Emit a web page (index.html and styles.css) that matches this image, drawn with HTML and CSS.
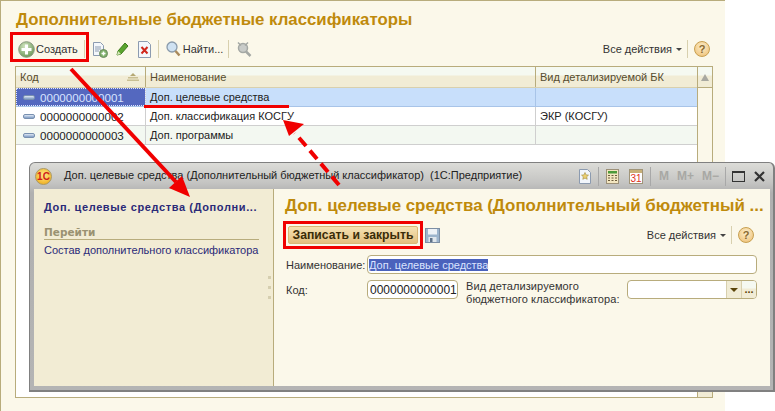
FILE: index.html
```html
<!DOCTYPE html>
<html lang="en">
<head>
  <meta charset="UTF-8" />
  <title>Дополнительные бюджетные классификаторы</title>
  <link rel="stylesheet" href="styles.css">
</head>
<body>
  <div class="page">
    <h1 class="title">Дополнительные бюджетные классификаторы</h1>

    <div class="toolbar">
      <div class="tool create">
        <svg width="17" height="17" viewBox="0 0 17 17"><defs><radialGradient id="g1" cx="40%" cy="30%" r="70%"><stop offset="0" stop-color="#d3e6c0"/><stop offset="1" stop-color="#6f9a5c"/></radialGradient></defs><circle cx="8.5" cy="8.5" r="7.8" fill="url(#g1)" stroke="#8a9a80"/><path d="M7 3.5h3V7h3.5v3H10v3.5H7V10H3.5V7H7z" fill="#fff"/></svg>
        <span>Создать</span>
      </div>
      <span class="sep"></span>
      <svg class="icon" width="16" height="17" viewBox="0 0 16 17"><path d="M1.500 1.500h7l3 3v10h-10z" fill="#f4f7fb" stroke="#8c9bb0"/><path d="M3 6h6M3 8h6M3 10h4" stroke="#8c9bb0"/><circle cx="11.500" cy="12.500" r="4" fill="#7fb069" stroke="#6d8a60"/><path d="M9.500 12.500h4M11.500 10.500v4" stroke="#fff" stroke-width="1.500"/></svg>
      <svg class="icon pencil" width="13" height="14" viewBox="0 0 13 14"><path d="M1 13l1-4 7-8 3 3-7 8z" fill="#5aa52e" stroke="#3d7a1c"/><path d="M1 13l1-4 3 3z" fill="#d8e8b8"/></svg>
      <svg class="icon del" width="13" height="17" viewBox="0 0 13 17"><path d="M.5.500h9l3 3v13H.5z" fill="#f4f7fb" stroke="#8c9bb0"/><path d="M3.500 6l6 6.500M9.500 6l-6 6.500" stroke="#d0281c" stroke-width="2"/></svg>
      <span class="sep"></span>
      <div class="tool find">
        <svg width="15" height="16" viewBox="0 0 15 16"><circle cx="6" cy="6" r="5" fill="#cfe2f2" stroke="#8a9bab" stroke-width="1.300"/><path d="M9.500 10l4 4.500" stroke="#a98a5c" stroke-width="2.500"/></svg>
        <span>Найти...</span>
      </div>
      <span class="sep"></span>
      <svg class="icon find-off" width="16" height="17" viewBox="0 0 16 17"><circle cx="7" cy="7" r="4.500" fill="#c9ccc9" stroke="#a4a8a4" stroke-width="1.500"/><path d="M10 10.500l4.500 4.500" stroke="#a4a8a4" stroke-width="2.500"/><path d="M2 1.500l3 3M12 1.500l-3 3" stroke="#a4a8a4" stroke-width="1.500"/></svg>
      <div class="actions">
        <span>Все действия</span><span class="caret"></span><span class="sep"></span>
        <span class="help">?</span>
      </div>
    </div>

    <div class="list">
      <div class="list-main">
        <div class="row head">
          <div class="cell c1">Код<svg class="sort" width="12" height="8" viewBox="0 0 12 8"><path d="M6 0l3 3H3z" fill="#b5a974"/><path d="M1 4h10v1.500H1zM0 6.500h12V8H0z" fill="#c9bf92"/></svg></div>
          <div class="cell c2">Наименование</div>
          <div class="cell c3">Вид детализируемой БК</div>
        </div>
        <div class="row selected">
          <div class="cell c1 code"><span class="dash"></span>0000000000001</div>
          <div class="cell c2">Доп. целевые средства</div>
          <div class="cell c3"></div>
        </div>
        <div class="row">
          <div class="cell c1 code"><span class="dash"></span>0000000000002</div>
          <div class="cell c2">Доп. классификация КОСГУ</div>
          <div class="cell c3">ЭКР (КОСГУ)</div>
        </div>
        <div class="row alt">
          <div class="cell c1 code"><span class="dash"></span>0000000000003</div>
          <div class="cell c2">Доп. программы</div>
          <div class="cell c3"></div>
        </div>
      </div>
      <div class="scrollbar">
        <div class="scroll-up"><span></span></div>
        <div class="scroll-track"></div>
        <div class="scroll-thumb"></div>
      </div>
    </div>
  </div>

  <!-- floating window -->
  <div class="window">
    <div class="win-title">
      <svg class="logo" width="17" height="17" viewBox="0 0 17 17"><defs><radialGradient id="g2" cx="50%" cy="40%" r="60%"><stop offset="0" stop-color="#ffe98a"/><stop offset="1" stop-color="#f0b020"/></radialGradient></defs><circle cx="8.500" cy="8.500" r="8" fill="url(#g2)" stroke="#a89868"/><text x="8.500" y="12" text-anchor="middle" class="logo-text">1С</text></svg>
      <span class="win-caption">Доп. целевые средства (Дополнительный бюджетный классификатор)  (1С:Предприятие)</span>
      <div class="win-tools">
        <svg width="12" height="15" viewBox="0 0 12 15"><path d="M.5.500h8l3 3v11H.5z" fill="#f2f6fb" stroke="#8c9bb0"/><path d="M6 3.500l1.100 2.400 2.400.2-1.800 1.700.5 2.500L6 9.100 3.800 10.300l.5-2.500-1.800-1.700 2.400-.2z" fill="#ecd070" stroke="#a08a3c" stroke-width=".6"/></svg>
        <span class="sep"></span>
        <svg width="13" height="15" viewBox="0 0 13 15"><rect x=".5" y=".5" width="12" height="14" fill="#f3e6c0" stroke="#9c9078"/><rect x="2" y="2" width="9" height="2.500" fill="#4d9a3a"/><path d="M2 6.500h2M5.500 6.500h2M9 6.500h2M2 9h2M5.500 9h2M9 9h2M2 11.500h2M5.500 11.500h2M9 11.500h2" stroke="#6a5a3a" stroke-width="1.200"/></svg>
        <svg class="cal" width="14" height="15" viewBox="0 0 14 15"><rect x=".5" y=".5" width="13" height="14" fill="#fff" stroke="#a09478"/><rect x="1" y="1" width="12" height="3" fill="#c8b078"/><text x="7" y="13" text-anchor="middle" class="cal-day">31</text></svg>
        <span class="sep"></span>
        <span class="mem first">M</span><span class="mem">M+</span><span class="mem">M−</span>
        <span class="sep mem-end"></span>
        <span class="win-max"></span>
        <svg class="win-close" width="11" height="11" viewBox="0 0 11 11"><path d="M1 1l9 9M10 1l-9 9" stroke="#333" stroke-width="2.200"/></svg>
      </div>
    </div>
    <div class="win-body">
      <aside class="side">
        <div class="side-title">Доп. целевые средства (Дополни...</div>
        <div class="side-head">Перейти</div>
        <div class="side-link">Состав дополнительного классификатора</div>
        <div class="grip"><i></i><i></i><i></i></div>
      </aside>
      <main class="form">
        <h2 class="form-title">Доп. целевые средства (Дополнительный бюджетный ...</h2>
        <div class="form-bar">
          <div class="red-box"><button class="save-close">Записать и закрыть</button></div>
          <svg class="floppy" width="15" height="15" viewBox="0 0 15 15"><rect x=".5" y=".5" width="14" height="14" fill="#9cb4cc" stroke="#7c8ea4"/><rect x="3" y="1" width="9" height="5.500" fill="#eef2f6"/><rect x="3.500" y="9" width="8" height="5" fill="#dfe6ec"/><rect x="5" y="10" width="2.500" height="4" fill="#5f7288"/></svg>
          <div class="actions">
            <span>Все действия</span><span class="caret"></span><span class="sep"></span>
            <span class="help">?</span>
          </div>
        </div>
        <div class="field-row name-row">
          <label class="label">Наименование:</label>
          <div class="input wide"><span class="sel-text">Доп. целевые средства</span></div>
        </div>
        <div class="field-row code-row">
          <label class="label">Код:</label>
          <div class="input code-input">0000000000001</div>
          <label class="label-2">Вид детализируемого<br>бюджетного классификатора:</label>
          <div class="input combo">
            <span class="combo-fill"></span>
            <span class="combo-btn"><span class="combo-arrow"></span></span>
            <span class="combo-btn dots">...</span>
          </div>
        </div>
      </main>
    </div>
  </div>

  <!-- red annotations drawn over the screenshot -->
  <div class="create-box"></div>
  <svg class="marks" width="775" height="411" viewBox="0 0 775 411">
    <path d="M144 106.500h145" stroke="#f00000" stroke-width="3"/>
    <path d="M71 69L176 182" stroke="#f00000" stroke-width="4"/>
    <path d="M190 197l-21-9 13-12z" fill="#f00000"/>
    <path d="M339 185L295 133" stroke="#f00000" stroke-width="4" stroke-dasharray="11 6"/>
    <path d="M283 120l21 4-15 12z" fill="#f00000"/>
  </svg>
</body>
</html>
```

FILE: styles.css
```css
* {
  box-sizing: border-box;
}

body {
  margin: 0;
  width: 775px;
  height: 411px;
  overflow: hidden;
  position: relative;
  background: #fff;
  font-family: "Liberation Sans", Arial, sans-serif;
  font-size: 11px;
  color: #333;
}

.page {
  width: 725px;
  height: 411px;
  padding: 11px 12px 13px 14px;
  background: #fbf8ea;
  border-top: 1px solid #b8ac7c;
  border-left: 1px solid #b8ac7c;
  display: flex;
  flex-direction: column;
}

.title {
  margin: 0 0 0 1px;
  height: 20px;
  font-size: 16.800px;
  line-height: 16px;
  font-weight: bold;
  color: #bf8a0c;
  white-space: nowrap;
}

/* toolbar */
.toolbar {
  height: 34px;
  display: flex;
  align-items: center;
  padding: 0 3px;
}

.tool {
  display: flex;
  align-items: center;
}

.create span {
  margin-left: 1px;
}

.sep {
  display: inline-block;
  width: 1px;
  height: 18px;
  background: #d8d0ae;
}

.create + .sep {
  margin-left: 6px;
}

.icon {
  margin-left: 7px;
}

.pencil {
  margin-left: 8px;
}

.del {
  margin-left: 9px;
  margin-right: 7px;
}

.find {
  margin-left: 7px;
  margin-right: 5px;
}

.find span {
  margin-left: 2px;
}

.actions {
  margin-left: auto;
  display: flex;
  align-items: center;
}

.caret {
  width: 0;
  height: 0;
  margin: 1px 5px 0 4px;
  border-left: 3px solid transparent;
  border-right: 3px solid transparent;
  border-top: 3px solid #444;
}

.help {
  width: 16px;
  height: 16px;
  margin-left: 6px;
  border-radius: 50%;
  border: 1px solid #c8a050;
  background: radial-gradient(circle at 50% 35%, #fbeecb, #eebd70);
  color: #8a6a30;
  font-size: 11px;
  font-weight: bold;
  line-height: 14px;
  text-align: center;
}

/* list */
.list {
  flex: 1;
  display: flex;
  background: #fff;
  border: 1px solid #b8ac7c;
}

.list-main {
  flex: 1;
}

.row {
  display: flex;
  height: 19px;
  border-bottom: 1px solid #cfcfcf;
  color: #222;
}

.cell {
  display: flex;
  align-items: center;
  padding: 0 4px;
  white-space: nowrap;
}

.c1 {
  width: 130px;
  border-right: 1px solid #cfcfcf;
}

.c2 {
  width: 390px;
  border-right: 1px solid #cfcfcf;
}

.c3 {
  flex: 1;
}

.head {
  height: 21px;
  border-bottom: 1px solid #d8d0ae;
  background: linear-gradient(#f5f9f1 0, #f5f9f1 8px, #f1ecd5 9px);
  color: #554c30;
}

.head .cell {
  border-right-color: #b8ac7c;
}

.sort {
  margin-left: auto;
  margin-right: 2px;
}

.selected {
  background: #c8dffb;
  border-bottom-color: #a8c4e8;
}

.selected .c1 {
  background: #5468bf;
  color: #d8e4ff;
  outline: 1px dotted #dfe6ff;
  outline-offset: -1px;
}

.selected .c2 {
  border-right-color: #a8c4e8;
}

.alt {
  background: #f3f8f1;
}

.code {
  padding-left: 7px;
  font-size: 11.600px;
}

.dash {
  width: 12px;
  height: 5px;
  margin-right: 5px;
  border-radius: 2px;
  background: linear-gradient(#dfe8f4, #7f9cc4);
  border: 1px solid #7890b0;
}

.scrollbar {
  width: 15px;
  border-left: 1px solid #b8ac7c;
  display: flex;
  flex-direction: column;
  background: #fbf8ea;
}

.scroll-up {
  height: 21px;
  border-bottom: 1px solid #b8ac7c;
  background: linear-gradient(#f5f9f1 0, #f5f9f1 8px, #f1ecd5 9px);
  display: flex;
  align-items: center;
  justify-content: center;
}

.scroll-up span {
  width: 0;
  height: 0;
  border-left: 4px solid transparent;
  border-right: 4px solid transparent;
  border-bottom: 7px solid #a8a8a0;
}

.scroll-track {
  flex: 1;
}

.scroll-thumb {
  height: 19px;
  background: #f1ecd5;
}

/* window */
.window {
  position: absolute;
  left: 29px;
  top: 162px;
  width: 746px;
  height: 230px;
  padding: 0 3px 4px 4px;
  background: linear-gradient(#dcdcd8 0, #c4c4c2 20px, #b0b0b0 30px, #b4b4b4 100%);
  border: 1px solid #808080;
  border-bottom-width: 2px;
  border-right-width: 2px;
  border-radius: 6px 6px 0 0;
  display: flex;
  flex-direction: column;
}

.win-title {
  height: 26px;
  display: flex;
  align-items: center;
  flex-shrink: 0;
}

.logo {
  margin-left: 1px;
}

.logo-text {
  font-family: "Liberation Sans", Arial, sans-serif;
  font-size: 10px;
  font-weight: bold;
  fill: #d0201a;
}

.win-caption {
  margin: 0 0 2px 12px;
  color: #222;
  white-space: pre;
}

.win-tools {
  margin-left: auto;
  display: flex;
  align-items: center;
  height: 100%;
  color: #333;
}

.win-tools svg {
  margin: 0 7px;
}

.win-tools .sep {
  height: 19px;
  background: #a8a8a8;
}

.win-tools .cal {
  margin-left: 3px;
}

.cal-day {
  font-family: "Liberation Sans", Arial, sans-serif;
  font-size: 10px;
  fill: #e03020;
}

.mem {
  margin: 0 4px;
  font-size: 12px;
  font-weight: bold;
  color: #a8a8a4;
}

.mem.first {
  margin-left: 8px;
}

.win-tools .mem-end {
  margin-left: 2px;
}

.win-max {
  width: 13px;
  height: 11px;
  margin-left: 6px;
  border: 1px solid #333;
  border-top-width: 2px;
}

.win-tools .win-close {
  margin: 0 5px 0 9px;
}

.win-body {
  flex: 1;
  display: flex;
  min-height: 0;
}

.side {
  width: 240px;
  padding: 12px 14px 0 10px;
  background: #f2ecd4;
  border-right: 1px solid #b8ac7c;
  position: relative;
}

.side-title {
  font-weight: bold;
  color: #2a2a78;
  white-space: nowrap;
  letter-spacing: 0.620px;
}

.side-head {
  margin-top: 14px;
  padding-bottom: 1px;
  border-bottom: 1px solid #b8ac7c;
  font-family: "DejaVu Sans", sans-serif;
  font-size: 10.500px;
  font-weight: bold;
  color: #9a9272;
  line-height: 11px;
}

.side-link {
  margin-top: 4px;
  color: #2a2a78;
  white-space: nowrap;
}

.grip {
  position: absolute;
  right: 2px;
  top: 87px;
  display: flex;
  flex-direction: column;
  gap: 7px;
}

.grip i {
  width: 3px;
  height: 3px;
  background: #d6cfb0;
}

.form {
  flex: 1;
  padding: 7px 10px 0 12px;
  background: #fbf8ea;
  min-width: 0;
}

.form-title {
  margin: 0 0 0 -1px;
  font-size: 16.900px;
  line-height: 20px;
  font-weight: bold;
  color: #bf8a0c;
  white-space: nowrap;
}

.form-bar {
  height: 28px;
  margin: 5px 6px 0 -3px;
  display: flex;
  align-items: center;
}

.red-box {
  width: 140px;
  height: 28px;
  padding: 2px;
  border: 3px solid #f00000;
  display: flex;
}

.save-close {
  flex: 1;
  padding: 0;
  font-family: "Liberation Sans", Arial, sans-serif;
  font-size: 12.200px;
  font-weight: bold;
  color: #3a2c08;
  border: 1px solid #d8b878;
  border-radius: 2px;
  background: linear-gradient(#f5e2b4, #e4c080);
}

.floppy {
  margin-left: 2px;
}

.field-row {
  display: flex;
  align-items: center;
}

.name-row {
  height: 19px;
  margin-top: 6px;
}

.code-row {
  height: 19px;
  margin-top: 6px;
}

.label {
  width: 81px;
  color: #333;
  flex-shrink: 0;
}

.input {
  height: 19px;
  background: #fff;
  border: 1px solid #b8ac7c;
  border-radius: 4px;
  display: flex;
  align-items: center;
  padding-left: 1px;
  color: #222;
}

.wide {
  width: 390px;
}

.sel-text {
  background: #4a62bc;
  color: #dbe4ff;
}

.code-input {
  width: 91px;
  padding-left: 2px;
  font-size: 12px;
}

.label-2 {
  width: 161px;
  margin: 6px 0 0 8px;
  line-height: 13px;
  white-space: nowrap;
  flex-shrink: 0;
  letter-spacing: 0.100px;
}

.combo {
  width: 130px;
  padding: 0;
  overflow: hidden;
}

.combo-fill {
  flex: 1;
}

.combo-btn {
  width: 15px;
  height: 100%;
  border-left: 1px solid #d8d0ae;
  background: #f1ecd5;
  display: flex;
  align-items: center;
  justify-content: center;
}

.combo-arrow {
  width: 0;
  height: 0;
  border-left: 4px solid transparent;
  border-right: 4px solid transparent;
  border-top: 4px solid #5a4408;
}

.dots {
  color: #5a4408;
  font-weight: bold;
  line-height: 1;
  background: linear-gradient(#f5f9f1 0, #f5f9f1 7px, #f1ecd5 8px);
}

/* annotations */
.create-box {
  position: absolute;
  left: 10px;
  top: 32px;
  width: 79px;
  height: 30px;
  border: 3px solid #f00000;
}

.marks {
  position: absolute;
  left: 0;
  top: 0;
  pointer-events: none;
}
```
